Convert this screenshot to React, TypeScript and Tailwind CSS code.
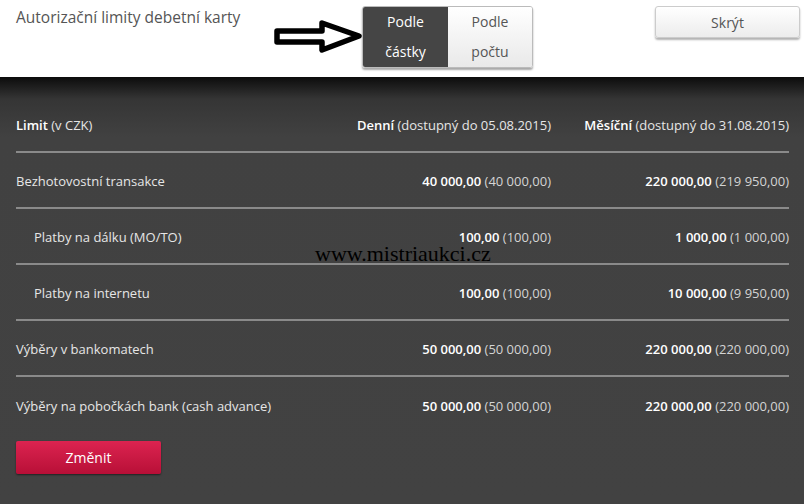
const rows = [
  { label: 'Bezhotovostní transakce', indent: false, d: '40 000,00', dp: '(40 000,00)', m: '220 000,00', mp: '(219 950,00)' },
  { label: 'Platby na dálku (MO/TO)', indent: true, d: '100,00', dp: '(100,00)', m: '1 000,00', mp: '(1 000,00)' },
  { label: 'Platby na internetu', indent: true, d: '100,00', dp: '(100,00)', m: '10 000,00', mp: '(9 950,00)' },
  { label: 'Výběry v bankomatech', indent: false, d: '50 000,00', dp: '(50 000,00)', m: '220 000,00', mp: '(220 000,00)' },
  { label: 'Výběry na pobočkách bank (cash advance)', indent: false, d: '50 000,00', dp: '(50 000,00)', m: '220 000,00', mp: '(220 000,00)' },
];

function Arrow() {
  return (
    <svg width="88" height="36" viewBox="0 0 88 36" className="mt-[19px] shrink-0">
      <polygon
        points="3,12 48,12 48,4 85,17 48,31 48,23 3,23"
        fill="#fff"
        stroke="#000"
        strokeWidth="5.5"
        strokeLinejoin="round"
      />
    </svg>
  );
}

export default function App() {
  return (
    <div className="relative w-[804px] h-[504px] overflow-hidden bg-white font-['Open_Sans',sans-serif] text-[13px]">
      <header className="flex h-[77px] items-start pl-[16px] pr-[4px] text-[14px]">
        <h1 className="w-[258px] pt-[6px] text-[15.5px] text-[#555] shrink-0">Autorizační limity debetní karty</h1>
        <Arrow />
        <div className="mt-[6px] flex h-[62px] w-[171px] overflow-hidden rounded-[3px] border border-[#bbb] shadow-[0_2px_2px_rgba(0,0,0,0.35)]">
          <div className="flex w-[85px] flex-col items-center justify-center bg-[#454545] leading-[30px] text-white">
            <span>Podle</span>
            <span>částky</span>
          </div>
          <div className="flex flex-1 flex-col items-center justify-center bg-gradient-to-b from-white to-[#e9e9e9] leading-[30px] text-[#555]">
            <span>Podle</span>
            <span>počtu</span>
          </div>
        </div>
        <button className="ml-auto mt-[6px] h-[32px] w-[145px] rounded-[3px] border border-[#ccc] bg-gradient-to-b from-white to-[#ececec] text-[#555] shadow-[0_2px_2px_rgba(0,0,0,0.3)]">
          Skrýt
        </button>
      </header>

      <main className="h-[427px] bg-[linear-gradient(to_bottom,#0c0c0c_0px,#353535_22px,#414141_60px,#424242_100%)] pl-[16px] pr-[15px] pt-[20px] text-[#e6e6e6]">
        <div className="grid h-[56px] grid-cols-[1fr_240px_238px] items-center whitespace-nowrap border-b-2 border-[#8a8a8a] pt-[3px]">
          <div><b className="font-semibold text-white">Limit</b> (v CZK)</div>
          <div className="text-right"><b className="font-semibold text-white">Denní</b> (dostupný do 05.08.2015)</div>
          <div className="text-right"><b className="font-semibold text-white">Měsíční</b> (dostupný do 31.08.2015)</div>
        </div>
        {rows.map((r, i) => (
          <div
            key={r.label}
            className={`grid h-[56px] grid-cols-[1fr_240px_238px] items-center whitespace-nowrap pt-[3px] ${i < rows.length - 1 ? 'border-b-2 border-[#8a8a8a]' : ''}`}
          >
            <div className={r.indent ? 'pl-[18px]' : ''}>{r.label}</div>
            <div className="text-right"><b className="font-semibold text-white">{r.d}</b> <span className="text-[#d4d4d4]">{r.dp}</span></div>
            <div className="text-right"><b className="font-semibold text-white">{r.m}</b> <span className="text-[#d4d4d4]">{r.mp}</span></div>
          </div>
        ))}
        <button className="mt-[8px] h-[33px] w-[145px] rounded-[2px] bg-gradient-to-b from-[#dc2350] to-[#b80f37] text-[14px] text-white shadow-[0_1px_2px_rgba(0,0,0,0.5)]">
          Změnit
        </button>
      </main>

      <div className="absolute left-[315px] top-[237px] font-['Liberation_Serif',serif] text-[22px] text-black">
        www.mistriaukci.cz
      </div>
    </div>
  );
}
